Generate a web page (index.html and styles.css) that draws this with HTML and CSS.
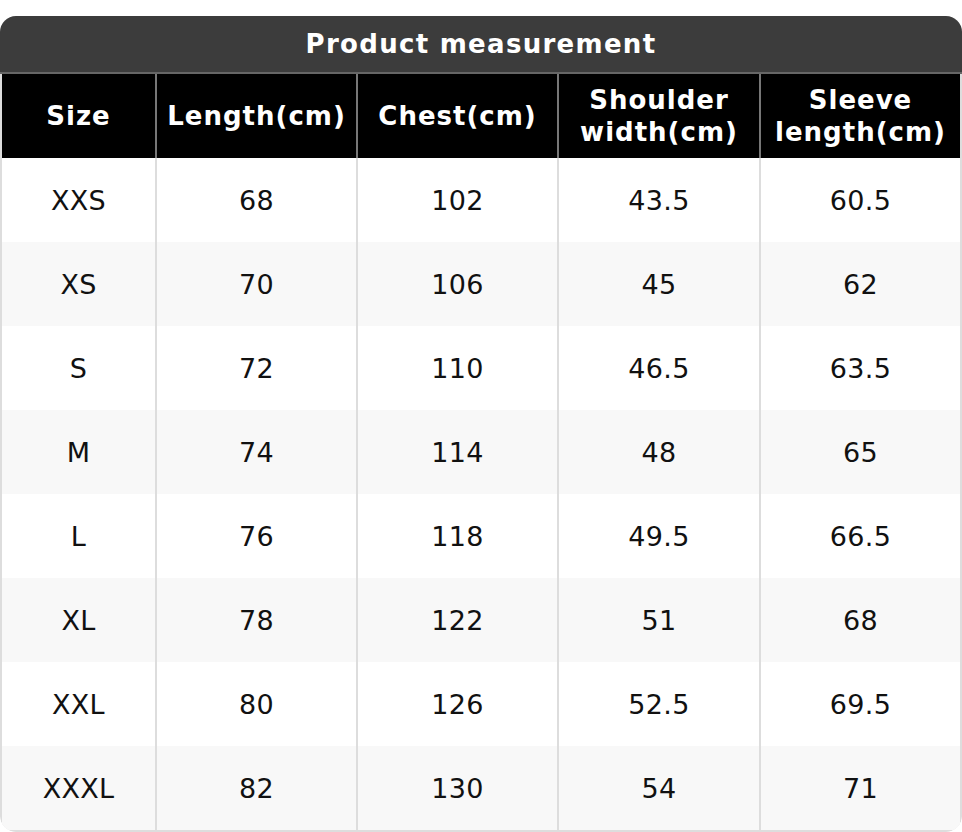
FILE: index.html
```html
<!DOCTYPE html>
<html>
<head>
<meta charset="utf-8">
<link rel="stylesheet" href="styles.css">
</head>
<body>
<div class="card">
  <div class="title">Product measurement</div>
  <table class="sizes">
    <colgroup>
      <col class="c1"><col class="c2"><col class="c3"><col class="c4"><col class="c5">
    </colgroup>
    <thead>
      <tr>
        <th>Size</th>
        <th>Length(cm)</th>
        <th>Chest(cm)</th>
        <th>Shoulder<br>width(cm)</th>
        <th>Sleeve<br>length(cm)</th>
      </tr>
    </thead>
    <tbody>
      <tr><td>XXS</td><td>68</td><td>102</td><td>43.5</td><td>60.5</td></tr>
      <tr><td>XS</td><td>70</td><td>106</td><td>45</td><td>62</td></tr>
      <tr><td>S</td><td>72</td><td>110</td><td>46.5</td><td>63.5</td></tr>
      <tr><td>M</td><td>74</td><td>114</td><td>48</td><td>65</td></tr>
      <tr><td>L</td><td>76</td><td>118</td><td>49.5</td><td>66.5</td></tr>
      <tr><td>XL</td><td>78</td><td>122</td><td>51</td><td>68</td></tr>
      <tr><td>XXL</td><td>80</td><td>126</td><td>52.5</td><td>69.5</td></tr>
      <tr><td>XXXL</td><td>82</td><td>130</td><td>54</td><td>71</td></tr>
    </tbody>
  </table>
</div>
</body>
</html>
```
FILE: styles.css
```css
html, body {
  margin: 0;
  padding: 0;
  background: #ffffff;
}
body {
  font-family: "DejaVu Sans", sans-serif;
  padding-top: 16px;
}
.card {
  width: 962px;
  border-radius: 16px;
  overflow: hidden;
}
.title {
  height: 56px;
  background: #3c3c3c;
  color: #ffffff;
  font-weight: bold;
  font-size: 26px;
  letter-spacing: 1.3px;
  line-height: 56px;
  text-align: center;
  border-bottom: 2px solid #666666;
}
.sizes {
  width: 962px;
  border-collapse: separate;
  border-spacing: 0;
  table-layout: fixed;
  border: 2px solid #dddddd;
  border-top: none;
  border-radius: 0 0 16px 16px;
}
.c1 { width: 153px; }
.c2 { width: 201px; }
.c3 { width: 201px; }
.c4 { width: 202px; }
.c5 { width: 201px; }
th {
  background: #000000;
  color: #ffffff;
  font-weight: bold;
  font-size: 26px;
  letter-spacing: 1px;
  line-height: 32px;
  height: 84px;
  padding: 0;
  box-sizing: border-box;
  border-left: 2px solid #777777;
  text-align: center;
  vertical-align: middle;
}
td {
  height: 84px;
  padding: 0;
  box-sizing: border-box;
  font-size: 27px;
  letter-spacing: 0.3px;
  color: #111111;
  text-align: center;
  vertical-align: middle;
  border-left: 2px solid #dddddd;
}
th:first-child, td:first-child {
  border-left: none;
}
tbody tr:nth-child(even) td {
  background: #f8f8f8;
}
```
